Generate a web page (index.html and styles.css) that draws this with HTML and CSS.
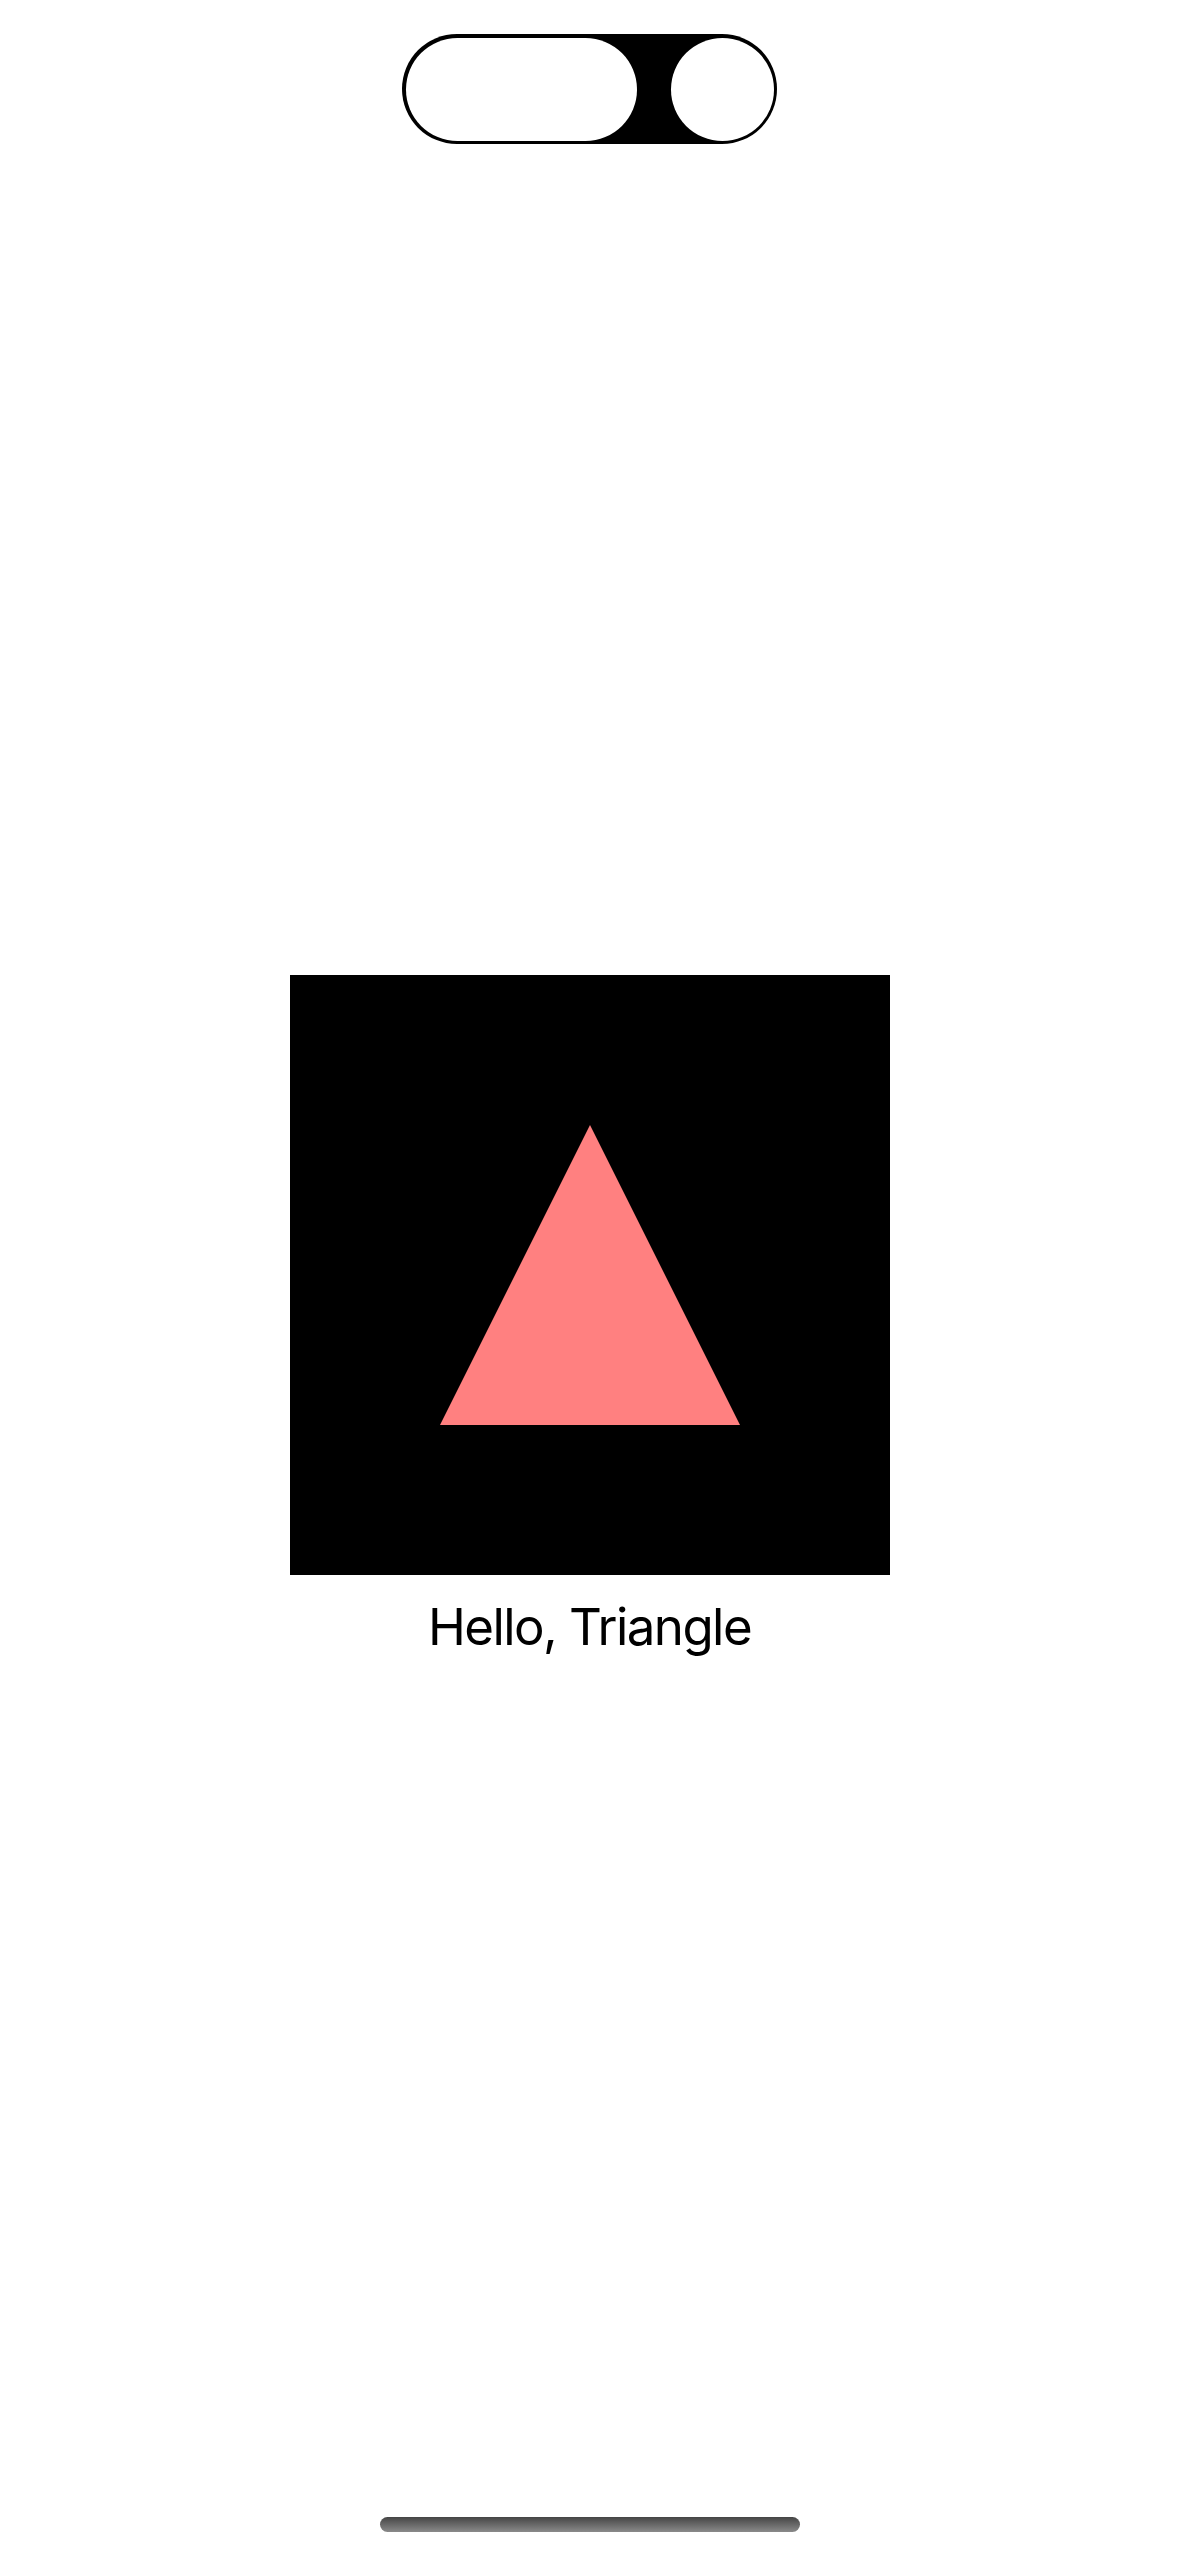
FILE: index.html
```html
<!DOCTYPE html>
<html lang="en">
<head>
<meta charset="utf-8">
<title>Hello, Triangle</title>
<link rel="stylesheet" href="styles.css">
</head>
<body>
<div class="screen">
  <div class="island">
    <div class="island-pill"></div>
    <div class="island-dot"></div>
  </div>
  <main class="content">
    <div class="viewport">
      <svg class="tri" width="600" height="600" viewBox="0 0 600 600">
        <polygon points="300,150 150,450 450,450" fill="#FF8080"/>
      </svg>
    </div>
    <p class="caption">Hello, Triangle</p>
  </main>
  <div class="home-indicator"></div>
</div>
</body>
</html>
```
FILE: styles.css
```css
html, body {
  margin: 0;
  padding: 0;
  background: #ffffff;
}
.screen {
  position: relative;
  width: 1179px;
  height: 2556px;
  overflow: hidden;
  background: #ffffff;
  font-family: Inter, "Noto Sans", "Liberation Sans", sans-serif;
}
.island {
  position: absolute;
  top: 34px;
  left: 402px;
  width: 375px;
  height: 110px;
  box-sizing: border-box;
  padding: 3.5px;
  background: #000;
  border-radius: 55px;
  display: flex;
  justify-content: space-between;
  align-items: center;
}
.island-pill {
  width: 231px;
  height: 103px;
  border-radius: 52px;
  background: #fff;
}
.island-dot {
  width: 103px;
  height: 103px;
  border-radius: 50%;
  background: #fff;
}
.content {
  display: flex;
  flex-direction: column;
  align-items: center;
  padding-top: 975px;
}
.viewport {
  width: 600px;
  height: 600px;
  background: #000;
}
.tri {
  display: block;
}
.caption {
  margin: 21px 0 0;
  font-size: 51px;
  line-height: 61px;
  color: #000;
  letter-spacing: -1.55px;
}
.home-indicator {
  position: absolute;
  left: 380px;
  top: 2517px;
  width: 420px;
  height: 15px;
  border-radius: 8px;
  background: linear-gradient(#454545, #8a8a8a);
}
```
